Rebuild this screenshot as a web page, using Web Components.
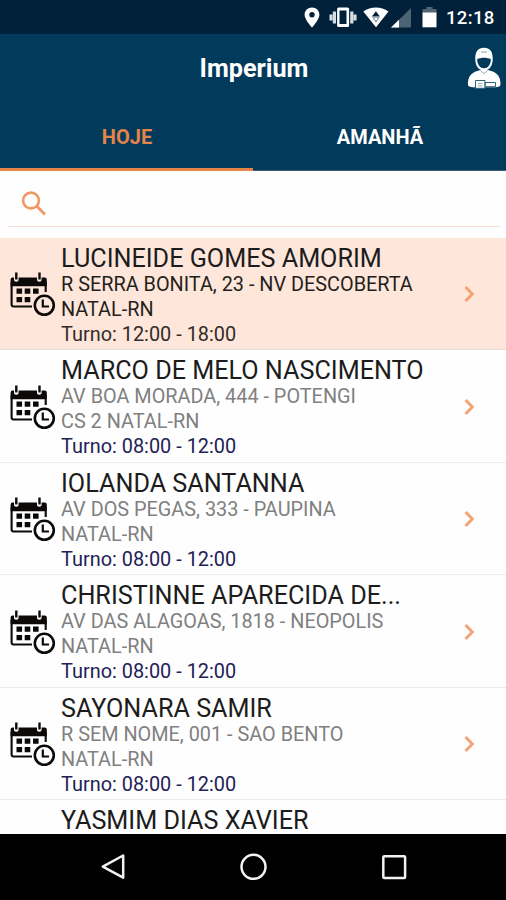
<!DOCTYPE html>
<html lang="pt-BR">
<head>
<meta charset="utf-8">
<title>Imperium</title>
<style>
html,body{margin:0;padding:0}
body{width:506px;height:900px;overflow:hidden;background:#fff;font-family:Roboto,"Liberation Sans",sans-serif}
</style>
</head>
<body>
<imperium-app></imperium-app>
<script>
const define = (name, html, init) => customElements.define(name, class extends HTMLElement {
  connectedCallback() {
    if (this.shadowRoot) return;
    const t = document.createElement('template');
    t.innerHTML = html;
    this.attachShadow({mode: 'open'}).append(t.content.cloneNode(true));
    if (init) init(this);
  }
});

define('status-bar', `
<style>
:host{display:flex;height:34px;flex:none;background:#002139;color:#fff;justify-content:flex-end;align-items:center;padding-right:11px;box-sizing:border-box}
svg{display:block;width:146px;height:34px}
span{font-size:18.5px;font-weight:500;line-height:34px;letter-spacing:.35px;width:49px;white-space:nowrap;padding-top:2px}
</style>
<svg viewBox="300 0 146 34">
  <path fill="#fff" fill-rule="evenodd" d="M312 7.5c-4.3 0-7.4 3.2-7.4 7.2 0 5 7.4 12.8 7.4 12.8s7.4-7.8 7.4-12.8c0-4-3.1-7.2-7.4-7.2zm0 4.6a2.7 2.7 0 1 1 0 5.4 2.7 2.7 0 0 1 0-5.4z"/>
  <path fill="#fff" fill-rule="evenodd" d="M338.600 7.500h9a1.500 1.500 0 0 1 1.500 1.500v16.500a1.500 1.500 0 0 1-1.500 1.500h-9a1.500 1.500 0 0 1-1.500-1.500v-16.500a1.500 1.500 0 0 1 1.500-1.500zM339.500 10.500v13.500h7v-13.500z"/>
  <path fill="#d5dee4" d="M332.800 11.500h3.200v12h-3.200zM350.200 11.500h3.200v12h-3.200zM329.500 14.500h3v6h-3zM353.600 14.500h3v6h-3z"/>
  <path fill="#fff" d="M363.300 11.500c7.500-5.400 17.600-5.400 25.200 0L376 27.300z"/>
  <path fill="#002139" d="M375.900 11.300l4 5.200h-8z"/>
  <path fill="#8496a3" d="M372.200 17.300h7.600l-3.800 5.500z"/>
  <path fill="#fff" d="M374.700 18h2.600v2h-2.600z"/>
  <path fill="#4b6474" d="M411 8v19.500h-20z"/>
  <path fill="#fff" d="M399 19.800v7.700h-8z"/>
  <path fill="#536572" d="M426.500 7h6v2h4v4h-14V9h4z"/>
  <path fill="#fff" d="M422.500 12.500h14v14.800h-14z"/>
</svg>
<span>12:18</span>`);

define('user-icon', `
<style>:host{display:block;width:34px;height:44px}svg{display:block}</style>
<svg width="34" height="44" viewBox="467 46 34 44">
  <path fill="#fff" d="M467.900 84c0-6.500 2.700-11 9.300-13l4-1.200h6l4 1.200c6.600 2 9.300 6.500 9.300 13 0 2.300-1.600 3.200-6 3.200h-20.600c-4.400 0-6-.9-6-3.200z"/>
  <path fill="#fff" d="M475.300 60c-.5-8 2.600-12.200 8.700-12.200s9.200 4.200 8.700 12.200c-.3 6.500-4 10.500-8.700 10.500s-8.400-4-8.700-10.500z"/>
  <path fill="#023a5b" d="M477.100 59.200c4-2 9.800-2 13.800 0-.2 5.600-3 9-6.900 9s-6.700-3.400-6.900-9z"/>
  <path fill="none" stroke="#8ca4b2" stroke-width="1" d="M481 52h6M480.500 70.500l3.500 3.200 3.500-3.200"/>
  <path fill="#fff" stroke="#345f79" stroke-width="1" d="M475.500 80.500h9.500v7.800h-9.500zM485 82.500h10.500v4.200H485z"/>
  <path fill="none" stroke="#93a9b6" stroke-width="1" d="M478 83.500h4.500M478 85.800h4.500"/>
</svg>`);

define('app-header', `
<style>
:host{display:grid;grid-template-columns:40px 1fr 40px;align-items:center;height:68px;flex:none;background:#023a5b;color:#fff}
h1{grid-column:2;margin:0;text-align:center;font-size:25.200px;font-weight:700;line-height:30px;padding:1px 0 0 2px}
user-icon{margin-left:1px}
</style>
<h1><slot></slot></h1><user-icon></user-icon>`);

define('tab-item', `
<style>
:host{display:grid;flex:1;grid-template-rows:1fr 1px;box-sizing:border-box;height:69px;color:#fff;font-size:20px;font-weight:700}
span{display:block;text-align:center;line-height:24px;padding:23px 0 0 1px}
i{background:#3c6079}
:host([active]){color:#e58449;grid-template-rows:1fr 3px}
:host([active]) i{background:#e58449}
</style><span><slot></slot></span><i></i>`);

define('tab-bar', `<style>:host{display:flex;flex:none;height:69px;background:#023a5b}</style><slot></slot>`);

define('search-field', `
<style>
:host{display:block;flex:none;height:66.500px;padding:0 6px 0 8px;box-sizing:border-box}
div{height:56px;box-sizing:border-box;border-bottom:1px solid #fadfd1;padding:20px 0 0 13px}
svg{display:block}
</style>
<div><svg width="26" height="26" viewBox="0 0 26 26" fill="none" stroke="#f0985f"><circle cx="10" cy="9.500" r="7.900" stroke-width="2.600"/><path stroke-width="2.800" d="M15.600 15.100L24 23.500"/></svg></div>`);

define('schedule-icon', `
<style>:host{display:block;width:48px;height:48px}svg{display:block}</style>
<svg width="48" height="48" viewBox="0 0 48 48">
  <path fill="none" stroke="#0c0a09" stroke-width="2.100" d="M3.600 12v22.500q0 2 2 2H24M37.700 12v10"/>
  <path fill="#0c0a09" d="M2.600 16.300V9.500q0-2 2-2H6v2.500q0 1.800 2.300 1.800t2.300-1.800V7.500h18.400v2.500q0 1.800 2.300 1.800t2.300-1.800V7.500h3.200q2 0 2 2v6.800z"/>
  <path fill="none" stroke="#0c0a09" stroke-width="2.400" d="M8.300 2.500v7M31.500 2.500v7"/>
  <path fill="#0c0a09" d="M8.500 18.500h5.600v5.300H8.500zM16.700 18.500h5.600v5.300h-5.600zM25 18.500h5.600v5.300H25zM8.500 27h5.600v5.300H8.500zM16.700 27h5.600v5.300h-5.600z"/>
  <circle cx="36.300" cy="35.300" r="11.500" fill="var(--row-bg)"/>
  <circle cx="36.300" cy="35.300" r="9.500" fill="none" stroke="#0c0a09" stroke-width="2.600"/>
  <path fill="none" stroke="#0c0a09" stroke-width="2.200" d="M34.800 29.500v7h6.200"/>
</svg>`);

define('visit-row', `
<style>
:host{--row-bg:#fefefe;--addr:#808080;--shift:#222256;display:grid;grid-template-columns:53px 1fr 60px;height:112.500px;flex:none;box-sizing:border-box;padding:0 0 0 8px;border-bottom:1px solid #ebebeb;background:var(--row-bg);align-items:start}
:host([selected]){--row-bg:#fee6da;--addr:#241f1c;--shift:#332c28;border-bottom-color:#e8ddd7}
schedule-icon{margin-top:32.500px}
.text{white-space:nowrap;padding-top:8px;min-width:0}
.name{font-size:25.200px;line-height:26px;color:#1c1c1c;height:26px}
.addr{font-size:19.850px;line-height:25.200px;color:var(--addr)}
.turn{font-size:19.900px;line-height:25.200px;color:var(--shift)}
.chev{align-self:center;margin:2px 0 0 15px;display:block}
</style>
<schedule-icon></schedule-icon>
<div class="text"><div class="name"><slot></slot></div><div class="addr" id="a"></div><div class="addr" id="b"></div><div class="turn" id="t"></div></div>
<svg class="chev" width="18" height="20" viewBox="0 0 18 20"><path d="M4.500 3l6.800 7-6.800 7" fill="none" stroke="#f5a374" stroke-width="3"/></svg>`,
el => {
  const r = el.shadowRoot;
  r.getElementById('a').textContent = el.getAttribute('street') || '';
  r.getElementById('b').textContent = el.getAttribute('city') || '';
  r.getElementById('t').textContent = el.hasAttribute('shift') ? 'Turno: ' + el.getAttribute('shift') : '';
});

define('visit-list', `<style>:host{display:flex;flex-direction:column;flex:1;min-height:0;overflow:hidden}</style><slot></slot>`);

define('nav-bar', `
<style>:host{display:flex;flex:none;height:66.500px;background:#000;justify-content:space-between;align-items:center;padding:0 98px;box-sizing:border-box}svg{display:block}</style>
<svg width="30" height="30" viewBox="0 0 30 30"><path d="M25.200 3.500v22.200L4.800 14.600z" fill="none" stroke="#f2f2f2" stroke-width="2.500" stroke-linejoin="round"/></svg>
<svg width="30" height="30" viewBox="0 0 30 30"><circle cx="15.500" cy="14.800" r="12" fill="none" stroke="#f2f2f2" stroke-width="2.500"/></svg>
<svg width="30" height="30" viewBox="0 0 30 30"><rect x="5.300" y="4.200" width="21.800" height="21.800" rx="1" fill="none" stroke="#f2f2f2" stroke-width="2.500"/></svg>`);

define('imperium-app', `
<style>:host{display:flex;flex-direction:column;width:506px;height:900px;background:#fefefe;overflow:hidden}</style>
<status-bar></status-bar>
<app-header>Imperium</app-header>
<tab-bar><tab-item active>HOJE</tab-item><tab-item>AMANHÃ</tab-item></tab-bar>
<search-field></search-field>
<visit-list>
<visit-row selected street="R SERRA BONITA, 23 - NV DESCOBERTA" city="NATAL-RN" shift="12:00 - 18:00">LUCINEIDE GOMES AMORIM</visit-row>
<visit-row street="AV BOA MORADA, 444 - POTENGI" city="CS 2 NATAL-RN" shift="08:00 - 12:00">MARCO DE MELO NASCIMENTO</visit-row>
<visit-row street="AV DOS PEGAS, 333 - PAUPINA" city="NATAL-RN" shift="08:00 - 12:00">IOLANDA SANTANNA</visit-row>
<visit-row street="AV DAS ALAGOAS, 1818 - NEOPOLIS" city="NATAL-RN" shift="08:00 - 12:00">CHRISTINNE APARECIDA DE...</visit-row>
<visit-row street="R SEM NOME, 001 - SAO BENTO" city="NATAL-RN" shift="08:00 - 12:00">SAYONARA SAMIR</visit-row>
<visit-row>YASMIM DIAS XAVIER</visit-row>
</visit-list>
<nav-bar></nav-bar>`);
</script>
</body>
</html>
